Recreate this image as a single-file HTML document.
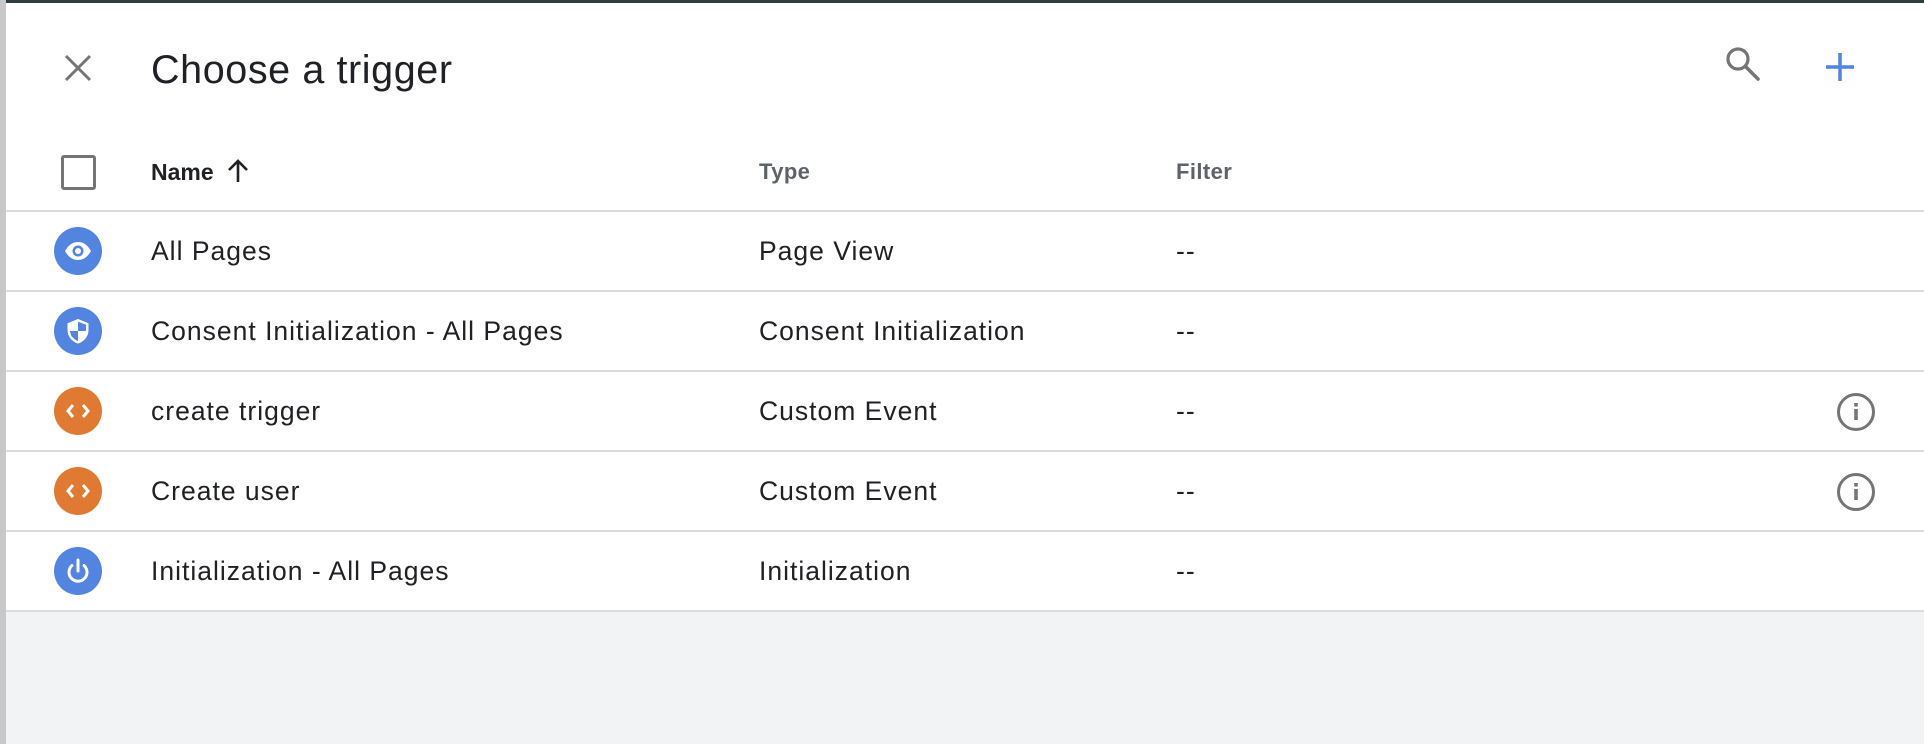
<!DOCTYPE html>
<html><head><meta charset="utf-8"><style>
*{margin:0;padding:0;box-sizing:border-box}
body{width:1924px;height:744px;overflow:hidden;background:#f1f3f4;font-family:"Liberation Sans",Arial,sans-serif;position:relative}
.top{position:absolute;left:0;top:0;width:1924px;height:3px;background:#2f3d3c}
.strip{position:absolute;left:0;top:0;width:6px;height:744px;background:#c8c8c8}
.panel{position:absolute;left:6px;top:3px;right:0;height:608px;background:#fff}
.title{position:absolute;left:151px;top:47px;font-size:39.5px;color:#202124;line-height:46px;letter-spacing:0.6px}
.hdr{position:absolute;top:158px;font-size:22px;color:#5f6368;font-weight:bold;line-height:28px;letter-spacing:0.4px}
.line{position:absolute;left:6px;right:0;height:2px;background:#dadce0}
.row{position:absolute;left:0;width:1924px;height:80px}
.row .t{position:absolute;top:24px;font-size:26.5px;color:#202124;line-height:32px;letter-spacing:1px}
.ic{position:absolute;left:54px;top:16px;width:48px;height:48px;border-radius:50%}
.b{background:#5284e0}.o{background:#e07a33}
</style></head><body>
<div class="top"></div>
<div class="strip"></div>
<div class="panel"></div>
<svg style="position:absolute;left:64px;top:54px" width="28" height="28" viewBox="0 0 28 28"><path d="M2 2L26 26M26 2L2 26" stroke="#757575" stroke-width="3"/></svg>
<div class="title">Choose a trigger</div>
<svg style="position:absolute;left:1722px;top:44px" width="44" height="44" viewBox="0 0 44 44"><circle cx="16" cy="15" r="10" fill="none" stroke="#757575" stroke-width="3.2"/><path d="M23.5 22.5L36 35" stroke="#757575" stroke-width="3.6" stroke-linecap="round"/></svg>
<svg style="position:absolute;left:1824px;top:51px" width="32" height="32" viewBox="0 0 32 32"><path d="M16 2V30M2 16H30" stroke="#5284e0" stroke-width="3.5"/></svg>
<div style="position:absolute;left:61px;top:155px;width:35px;height:35px;border:3.5px solid #757575;border-radius:3px"></div>
<div class="hdr" style="left:151px;color:#202124;font-size:23px;letter-spacing:0">Name</div>
<svg style="position:absolute;left:226px;top:158px" width="24" height="26" viewBox="0 0 24 26"><path d="M12 24V3M3 12L12 3L21 12" fill="none" stroke="#202124" stroke-width="2.6"/></svg>
<div class="hdr" style="left:759px">Type</div>
<div class="hdr" style="left:1176px">Filter</div>
<div class="line" style="top:210px"></div>

<div class="row" style="top:211px">
<div class="ic b"><svg width="48" height="48" viewBox="0 0 48 48"><path d="M11 24C15 17 19.5 15 24 15S33 17 37 24C33 31 28.5 33 24 33S15 31 11 24Z" fill="#fff"/><circle cx="24" cy="24" r="5.5" fill="#5284e0"/><circle cx="24" cy="24" r="3" fill="#fff"/></svg></div>
<div class="t" style="left:151px">All Pages</div><div class="t" style="left:759px">Page View</div><div class="t" style="left:1176px">--</div></div>
<div class="line" style="top:290px"></div>

<div class="row" style="top:291px">
<div class="ic b"><svg width="48" height="48" viewBox="0 0 48 48"><defs><clipPath id="sh"><path d="M24 14.6L32 17.8V23C32 28 29 32.2 24 34C19 32.2 16 28 16 23V17.8Z"/></clipPath></defs><path d="M24 12L34.5 16.2V23C34.5 29.5 30.2 34.6 24 36.6C17.8 34.6 13.5 29.5 13.5 23V16.2Z" fill="#fff"/><g clip-path="url(#sh)"><rect x="24" y="10" width="12" height="14" fill="#5284e0"/><rect x="12" y="24" width="12" height="14" fill="#5284e0"/></g></svg></div>
<div class="t" style="left:151px">Consent Initialization - All Pages</div><div class="t" style="left:759px">Consent Initialization</div><div class="t" style="left:1176px">--</div></div>
<div class="line" style="top:370px"></div>

<div class="row" style="top:371px">
<div class="ic o"><svg width="48" height="48" viewBox="0 0 48 48"><path d="M19 18L14 24L19 30M29 18L34 24L29 30" fill="none" stroke="#fff" stroke-width="3"/></svg></div>
<div class="t" style="left:151px">create trigger</div><div class="t" style="left:759px">Custom Event</div><div class="t" style="left:1176px">--</div>
<svg style="position:absolute;left:1836px;top:21px" width="40" height="40" viewBox="0 0 40 40"><circle cx="20" cy="20" r="17.5" fill="none" stroke="#757575" stroke-width="3"/><rect x="18.2" y="17" width="3.6" height="11" fill="#757575"/><rect x="18.2" y="11" width="3.6" height="3.6" fill="#757575"/></svg></div>
<div class="line" style="top:450px"></div>

<div class="row" style="top:451px">
<div class="ic o"><svg width="48" height="48" viewBox="0 0 48 48"><path d="M19 18L14 24L19 30M29 18L34 24L29 30" fill="none" stroke="#fff" stroke-width="3"/></svg></div>
<div class="t" style="left:151px">Create user</div><div class="t" style="left:759px">Custom Event</div><div class="t" style="left:1176px">--</div>
<svg style="position:absolute;left:1836px;top:21px" width="40" height="40" viewBox="0 0 40 40"><circle cx="20" cy="20" r="17.5" fill="none" stroke="#757575" stroke-width="3"/><rect x="18.2" y="17" width="3.6" height="11" fill="#757575"/><rect x="18.2" y="11" width="3.6" height="3.6" fill="#757575"/></svg></div>
<div class="line" style="top:530px"></div>

<div class="row" style="top:531px">
<div class="ic b"><svg width="48" height="48" viewBox="0 0 48 48"><path d="M18 18.5A9 9 0 1 0 30 18.5" fill="none" stroke="#fff" stroke-width="3" stroke-linecap="round"/><path d="M24 13V24" stroke="#fff" stroke-width="3" stroke-linecap="round"/></svg></div>
<div class="t" style="left:151px">Initialization - All Pages</div><div class="t" style="left:759px">Initialization</div><div class="t" style="left:1176px">--</div></div>
<div class="line" style="top:610px"></div>
</body></html>
